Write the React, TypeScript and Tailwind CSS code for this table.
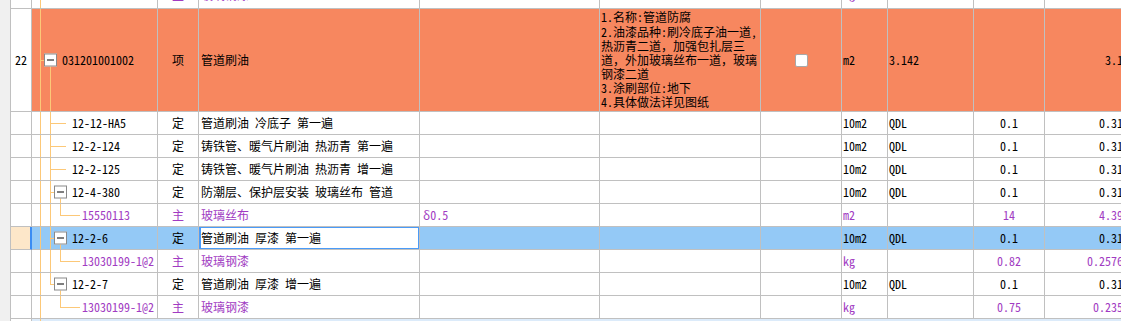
import React from 'react';

type Tree = 'root' | 'leaf' | 'branch' | 'child' | 'lastBranch' | 'lastChild' | 'none';

type Row = {
  num?: string;
  tree: Tree;
  code?: string;
  kind?: string;
  name?: string;
  spec?: string;
  unit?: string;
  qdl?: string;
  qty?: string;
  amt?: string;
  main?: boolean;
  selected?: boolean;
};

const body: Row[] = [
  { tree: 'leaf', code: '12-12-HA5', kind: '定', name: '管道刷油 冷底子 第一遍', unit: '10m2', qdl: 'QDL', qty: '0.1', amt: '0.3142' },
  { tree: 'leaf', code: '12-2-124', kind: '定', name: '铸铁管、暖气片刷油 热沥青 第一遍', unit: '10m2', qdl: 'QDL', qty: '0.1', amt: '0.3142' },
  { tree: 'leaf', code: '12-2-125', kind: '定', name: '铸铁管、暖气片刷油 热沥青 增一遍', unit: '10m2', qdl: 'QDL', qty: '0.1', amt: '0.3142' },
  { tree: 'branch', code: '12-4-380', kind: '定', name: '防潮层、保护层安装 玻璃丝布 管道', unit: '10m2', qdl: 'QDL', qty: '0.1', amt: '0.3142' },
  { tree: 'child', code: '15550113', kind: '主', name: '玻璃丝布', spec: 'δ0.5', unit: 'm2', qty: '14', amt: '4.3988', main: true },
  { tree: 'branch', code: '12-2-6', kind: '定', name: '管道刷油 厚漆 第一遍', unit: '10m2', qdl: 'QDL', qty: '0.1', amt: '0.3142', selected: true },
  { tree: 'child', code: '13030199-1@2', kind: '主', name: '玻璃钢漆', unit: 'kg', qty: '0.82', amt: '0.257644', main: true },
  { tree: 'lastBranch', code: '12-2-7', kind: '定', name: '管道刷油 厚漆 增一遍', unit: '10m2', qdl: 'QDL', qty: '0.1', amt: '0.3142' },
  { tree: 'lastChild', code: '13030199-1@2', kind: '主', name: '玻璃钢漆', unit: 'kg', qty: '0.75', amt: '0.23565', main: true },
];

const desc = [
  '1.名称:管道防腐',
  '2.油漆品种:刷冷底子油一道,',
  '热沥青二道，加强包扎层三',
  '道，外加玻璃丝布一道，玻璃',
  '钢漆二道',
  '3.涂刷部位:地下',
  '4.具体做法详见图纸',
];

const cell = 'shrink-0 border-r border-b border-[#c0c0c0] flex items-center overflow-hidden whitespace-nowrap';

function Box({ left }: { left: string }) {
  return (
    <span className={`absolute ${left} top-1/2 -translate-y-1/2 w-[13px] h-[13px] border border-[#8a8a8a] bg-white flex items-center justify-center`}>
      <span className="w-[7px] h-px bg-black" />
    </span>
  );
}

function TreeLines({ tree }: { tree: Tree }) {
  const ln = 'absolute bg-[#fcc878]';
  return (
    <>
      <span className={`${ln} left-[8px] top-0 bottom-0 w-px`} />
      {tree === 'root' && (
        <>
          <span className={`${ln} left-[8px] top-1/2 w-[4px] h-px`} />
          <span className={`${ln} left-[18px] top-1/2 bottom-0 w-px`} />
          <Box left="left-[12px]" />
        </>
      )}
      {tree === 'leaf' && (
        <>
          <span className={`${ln} left-[18px] top-0 bottom-0 w-px`} />
          <span className={`${ln} left-[18px] top-1/2 w-[16px] h-px`} />
        </>
      )}
      {(tree === 'branch' || tree === 'lastBranch') && (
        <>
          <span className={`${ln} left-[18px] top-0 w-px ${tree === 'branch' ? 'bottom-0' : 'h-1/2'}`} />
          <span className={`${ln} left-[18px] top-1/2 w-[4px] h-px`} />
          <span className={`${ln} left-[28px] top-1/2 bottom-0 w-px`} />
          <Box left="left-[22px]" />
        </>
      )}
      {(tree === 'child' || tree === 'lastChild') && (
        <>
          {tree === 'child' && <span className={`${ln} left-[18px] top-0 bottom-0 w-px`} />}
          <span className={`${ln} left-[28px] top-0 h-1/2 w-px`} />
          <span className={`${ln} left-[28px] top-1/2 w-[20px] h-px`} />
        </>
      )}
    </>
  );
}

function DataRow({ r }: { r: Row }) {
  const color = r.main ? 'text-[#a13bc2]' : 'text-black';
  const bg = r.selected ? 'bg-[#94c9f6]' : 'bg-white';
  const pad = r.tree === 'child' || r.tree === 'lastChild' ? 'pl-[50px]' : 'pl-[40px]';
  return (
    <div className={`flex shrink-0 h-[23px] ${color}`}>
      <div className={`${cell} w-[21px] justify-center ${r.selected ? 'bg-[#fde7c9] border-r-2 border-r-[#3b8cf3]' : 'bg-white'}`}>{r.num}</div>
      <div className={`${cell} ${bg} w-[126px] relative ${pad}`}>
        {r.tree !== 'none' && <TreeLines tree={r.tree} />}
        <span>{r.code}</span>
      </div>
      <div className={`${cell} ${bg} w-[41px] justify-center`}>{r.kind}</div>
      <div className={`${cell} ${bg} w-[221px] pl-[2px] relative`}>
        {r.selected && (
          <span className="absolute -top-px left-0 -right-px -bottom-px border-2 border-[#4a9bf8] bg-white" />
        )}
        <span className="relative">{r.name}</span>
      </div>
      <div className={`${cell} ${bg} w-[180px] pl-[3px]`}>{r.spec}</div>
      <div className={`${cell} ${bg} w-[161px]`} />
      <div className={`${cell} ${bg} w-[81px]`} />
      <div className={`${cell} ${bg} w-[46px] pl-[1px]`}>{r.unit}</div>
      <div className={`${cell} ${bg} w-[86px] pl-[1px]`}>{r.qdl}</div>
      <div className={`${cell} ${bg} w-[71px] justify-center`}>{r.qty}</div>
      <div className={`${cell} ${bg} w-[92px] justify-end pr-[1px]`}>{r.amt}</div>
    </div>
  );
}

export default function App() {
  const orange = 'bg-[#f7875f]';
  return (
    <div className="w-[1121px] h-[321px] overflow-hidden bg-white flex items-start text-[12px] leading-none font-['Noto_Sans_Mono_CJK_SC','Liberation_Mono','Noto_Sans_CJK_SC',monospace]">
      <div className="w-[11px] h-full shrink-0 bg-[#f0f0f0] border-r border-[#c0c0c0]" />
      <div className="flex flex-col shrink-0">
        {/* partly scrolled-out row */}
        <div className="flex shrink-0 h-[23px] -mt-[14px] text-[#a13bc2]">
          <div className={`${cell} w-[21px] bg-white`} />
          <div className={`${cell} w-[126px] relative`}>
            <span className="absolute bg-[#fcc878] left-[8px] top-0 bottom-0 w-px" />
          </div>
          <div className={`${cell} w-[41px] justify-center pb-[4px]`}>主</div>
          <div className={`${cell} w-[221px] pl-[2px] pb-[4px]`}>玻璃钢漆</div>
          <div className={`${cell} w-[180px]`} />
          <div className={`${cell} w-[161px]`} />
          <div className={`${cell} w-[81px]`} />
          <div className={`${cell} w-[46px] pl-[1px] pb-[6px]`}>kg</div>
          <div className={`${cell} w-[86px]`} />
          <div className={`${cell} w-[71px]`} />
          <div className={`${cell} w-[92px]`} />
        </div>

        {/* list item row */}
        <div className="flex shrink-0 h-[103px] text-black">
          <div className={`${cell} w-[21px] justify-center bg-white`}>22</div>
          <div className={`${cell} ${orange} w-[126px] relative pl-[30px]`}>
            <TreeLines tree="root" />
            <span>031201001002</span>
          </div>
          <div className={`${cell} ${orange} w-[41px] justify-center`}>项</div>
          <div className={`${cell} ${orange} w-[221px] pl-[2px]`}>管道刷油</div>
          <div className={`${cell} ${orange} w-[180px]`} />
          <div className={`${cell} ${orange} w-[161px] pl-[1px]`}>
            <div className="flex flex-col leading-[14.2px]">
              {desc.map((d) => (
                <span key={d} className="h-[14.2px]">{d}</span>
              ))}
            </div>
          </div>
          <div className={`${cell} ${orange} w-[81px] justify-center`}>
            <span className="w-[13px] h-[13px] bg-white border border-[#a8a8a8] rounded-[2px]" />
          </div>
          <div className={`${cell} ${orange} w-[46px] pl-[1px]`}>m2</div>
          <div className={`${cell} ${orange} w-[86px] pl-[1px]`}>3.142</div>
          <div className={`${cell} ${orange} w-[71px]`} />
          <div className={`${cell} ${orange} w-[92px] justify-end pr-[1px]`}>3.142</div>
        </div>

        {body.map((r, i) => (
          <DataRow key={i} r={r} />
        ))}

        {/* next row, cut by the window */}
        <div className="flex shrink-0 h-[23px]">
          <div className={`${cell} w-[21px] bg-white`} />
          <div className="flex-1 bg-[#dcebfa] relative">
            <span className="absolute bg-[#fcc878] left-[8px] top-0 bottom-0 w-px" />
          </div>
        </div>
      </div>
    </div>
  );
}
